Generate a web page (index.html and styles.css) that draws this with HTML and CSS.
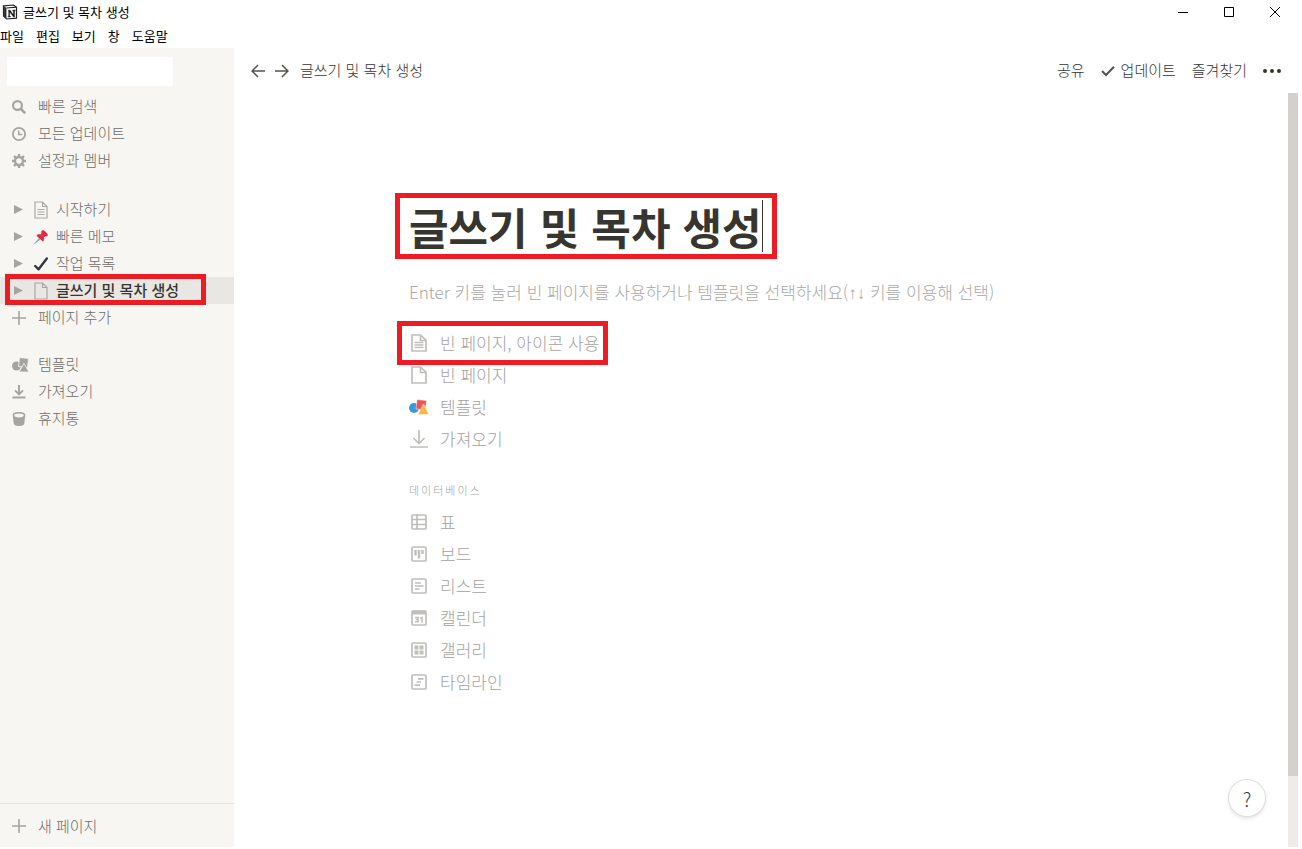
FILE: index.html
```html
<!DOCTYPE html>
<html lang="ko">
<head>
<meta charset="utf-8">
<title>글쓰기 및 목차 생성</title>
<link rel="stylesheet" href="styles.css">
</head>
<body>
<div class="app">
  <header class="titlebar">
    <svg class="logo" viewBox="0 0 16 16"><path d="M1.5 1.8 11.5 1l3 2.2v11L4.500 15 1.500 12z" fill="#fff" stroke="#222" stroke-width="1.200"/><path d="M1.500 1.800 4.500 4v11L1.500 12z" fill="#333"/><path d="M4.500 4l10-.8" stroke="#222" stroke-width="1.200"/><path d="M6 6.200h2.200l3.200 4.800V6.600l-.9-.2V6h2.900v.4l-.8.200V13h-1L7.600 7.800v4.600l1 .2v.4H5.900v-.4l.8-.2V6.800z" fill="#111" stroke="#111" stroke-width=".4"/></svg>
    <span class="titlebar-name">글쓰기 및 목차 생성</span>
    <div class="window-controls">
      <button type="button" aria-label="최소화"><svg viewBox="0 0 12 12"><path d="M1 6.500h10"/></svg></button>
      <button type="button" aria-label="최대화"><svg viewBox="0 0 12 12"><path d="M1.500 1.500h9v9h-9z"/></svg></button>
      <button type="button" aria-label="닫기"><svg viewBox="0 0 12 12"><path d="M1 1l10 10M11 1 1 11"/></svg></button>
    </div>
  </header>
  <nav class="menubar">
    <button type="button">파일</button><button type="button">편집</button><button type="button">보기</button><button type="button">창</button><button type="button">도움말</button>
  </nav>
  <div class="workspace">
    <aside class="sidebar">
      <div class="account"></div>
      <nav class="group">
        <a class="row" href="#"><svg class="icon" viewBox="0 0 14 14"><circle cx="5.500" cy="5.500" r="4.400" fill="none" stroke="currentColor" stroke-width="2.200"/><path d="M8.800 8.800 13.200 13.200" stroke="currentColor" stroke-width="2.600"/></svg><span class="label">빠른 검색</span></a>
        <a class="row" href="#"><svg class="icon" viewBox="0 0 14 14"><circle cx="7" cy="7" r="6.100" fill="none" stroke="currentColor" stroke-width="1.800"/><path d="M6.700 3.500v4h3.500" fill="none" stroke="currentColor" stroke-width="1.500"/></svg><span class="label">모든 업데이트</span></a>
        <a class="row" href="#"><svg class="icon" viewBox="0 0 14 14"><circle cx="7" cy="7" r="4" fill="none" stroke="currentColor" stroke-width="2.400"/><path d="M7 0v3M7 11v3M0 7h3M11 7h3M2 2l2.200 2.200M9.800 9.800 12 12M12 2 9.800 4.200M4.200 9.800 2 12" stroke="currentColor" stroke-width="2.400"/></svg><span class="label">설정과 멤버</span></a>
      </nav>
      <nav class="group pages">
        <a class="row" href="#"><svg class="arrow" viewBox="0 0 8 8"><path d="M0 0v8l8-4z"/></svg><svg class="page-icon" viewBox="0 0 14 18"><path d="M1 1h7.500L13 5.500V17H1zM8.500 1v4.500H13M3.500 8.500h7M3.500 11h7M3.500 13.500h7"/></svg><span class="label">시작하기</span></a>
        <a class="row" href="#"><svg class="arrow" viewBox="0 0 8 8"><path d="M0 0v8l8-4z"/></svg><svg class="emoji" viewBox="0 0 14 14"><path d="M5.500 8 .5 13.500l6-4.500z" fill="#8fa9b8" stroke="#8fa9b8"/><path d="M8 .8c1.500-1.200 6.200 3.200 5.300 4.800-.5.700-1.500.5-2.200.3L9.500 7.500c.5 1.500.2 2.800-.5 3.700L2.800 5.500c1-.9 2.200-1.200 3.700-.8l1.400-1.600C7.600 2.200 7.500 1.400 8 .8z" fill="#dd2e44" stroke="#dd2e44" stroke-width=".8"/><path d="M9 1.500l3.500 3.300M3.500 5.700l5 4.500" stroke="#b91f3b" stroke-width=".6"/></svg><span class="label">빠른 메모</span></a>
        <a class="row" href="#"><svg class="arrow" viewBox="0 0 8 8"><path d="M0 0v8l8-4z"/></svg><svg class="emoji" viewBox="0 0 14 14"><path d="M1.200 9 4.600 12.300 12.800 1.500" fill="none" stroke="#31373d" stroke-width="2.400" stroke-linecap="round" stroke-linejoin="round"/></svg><span class="label">작업 목록</span></a>
        <a class="row current" href="#" aria-current="page"><svg class="arrow" viewBox="0 0 8 8"><path d="M0 0v8l8-4z"/></svg><svg class="page-icon" viewBox="0 0 14 18"><path d="M1 1h7.500L13 5.500V17H1zM8.500 1v4.500H13"/></svg><span class="label">글쓰기 및 목차 생성</span><span class="mark mark-row"></span></a>
        <button class="row" type="button"><svg class="icon" viewBox="0 0 14 14"><path d="M7 0v14M0 7h14" stroke="currentColor" stroke-width="1.600"/></svg><span class="label">페이지 추가</span></button>
      </nav>
      <nav class="group tools">
        <a class="row" href="#"><svg class="icon shapes" viewBox="0 0 18 16"><circle cx="4.500" cy="9" r="4.500" fill="currentColor"/><path d="M7.500 .5l9 1-1 9-9-1z" fill="currentColor" stroke="#f7f6f3" stroke-width=".8"/><path d="M12 6.500 17 15H7z" fill="currentColor" stroke="#f7f6f3" stroke-width=".8"/></svg><span class="label">템플릿</span></a>
        <a class="row" href="#"><svg class="icon" viewBox="0 0 14 14"><path d="M7 0v9M3 5.300l4 4 4-4M.5 12.500h13" fill="none" stroke="currentColor" stroke-width="1.900"/></svg><span class="label">가져오기</span></a>
        <a class="row" href="#"><svg class="icon" viewBox="0 0 14 14"><path fill-rule="evenodd" d="M7 0c4 0 6.500 1.300 6.300 3l-1 8.500C12 13.200 10 14 7 14s-5-.8-5.300-2.500L.7 3C.5 1.300 3 0 7 0zm0 1.500c-2.700 0-4.800.8-4.800 1.800S3.800 5.500 7 5.500s4.800-1.200 4.800-2.200S9.700 1.500 7 1.500z" fill="currentColor"/></svg><span class="label">휴지통</span></a>
      </nav>
      <button class="new-page" type="button"><svg class="icon" viewBox="0 0 14 14"><path d="M7 0v14M0 7h14" stroke="currentColor" stroke-width="1.600"/></svg>새 페이지</button>
    </aside>
    <main class="main">
      <div class="topbar">
        <button type="button" aria-label="뒤로"><svg class="nav-arrow" viewBox="0 0 14 14"><path d="M14 7H1M7 1 1 7l6 6"/></svg></button>
        <button type="button" aria-label="앞으로"><svg class="nav-arrow" viewBox="0 0 14 14"><path d="M0 7h13M7 1l6 6-6 6"/></svg></button>
        <a class="crumb label" href="#">글쓰기 및 목차 생성</a>
        <div class="actions">
          <button type="button"><span class="label">공유</span></button>
          <button type="button"><svg class="check" viewBox="0 0 14 14"><path d="M1 7 5 11 13 2.700"/></svg><span class="label">업데이트</span></button>
          <button type="button"><span class="label">즐겨찾기</span></button>
          <button type="button" aria-label="더 보기"><svg class="dots" viewBox="0 0 18 4"><circle cx="2" cy="2" r="2"/><circle cx="9" cy="2" r="2"/><circle cx="16" cy="2" r="2"/></svg></button>
        </div>
      </div>
      <div class="scroller">
        <article class="page">
          <h1 class="title">글쓰기 및 목차 생성<span class="caret"></span><span class="mark mark-title"></span></h1>
          <p class="hint">Enter 키를 눌러 빈 페이지를 사용하거나 템플릿을 선택하세요(<span class="keys">↑↓</span> 키를 이용해 선택)</p>
          <div class="options">
            <button class="option" type="button"><svg class="doc" viewBox="0 0 16 18"><path d="M1 1h8.500L15 6.200V17H1zM9.500 1v5.500H15M3.500 8.500h9M3.500 11h9M3.500 13.500h9"/></svg><span class="label">빈 페이지, 아이콘 사용</span><span class="mark mark-option"></span></button>
            <button class="option" type="button"><svg class="doc" viewBox="0 0 16 18"><path d="M1 1h8.500L15 6.200V17H1zM9.500 1v5.500H15"/></svg><span class="label">빈 페이지</span></button>
            <button class="option" type="button"><svg class="color-shapes" viewBox="0 0 20 16"><circle cx="5" cy="9" r="5" fill="#3a9bdc"/><path d="M8 .5l9.500 1-1 9.500L7 10z" fill="#eb5757" stroke="#fff" stroke-width=".5"/><path d="M14.500 5 20 15.500H9z" fill="#f7b93e" stroke="#fff" stroke-width=".5"/></svg><span class="label">템플릿</span></button>
            <button class="option" type="button"><svg class="doc import" viewBox="0 0 18 18"><path d="M9 0v13M3.500 8 9 13.500 14.500 8M0 17h18"/></svg><span class="label">가져오기</span></button>
          </div>
          <h2 class="caption">데이터베이스</h2>
          <div class="options">
            <button class="option" type="button"><svg class="db" viewBox="0 0 16 16"><rect x="1" y="1" width="14" height="14" rx="1"/><path d="M1 5.500h14M1 10.500h14M6 1v14"/></svg><span class="label">표</span></button>
            <button class="option" type="button"><svg class="db" viewBox="0 0 16 16"><rect x="1" y="1" width="14" height="14" rx="1"/><path d="M4.500 4v5.500M8 4v8.500M11.500 4v4" stroke-width="2.400"/></svg><span class="label">보드</span></button>
            <button class="option" type="button"><svg class="db" viewBox="0 0 16 16"><rect x="1" y="1" width="14" height="14" rx="1"/><path d="M4 5h6M4 8h8.500M4 11h4.500"/></svg><span class="label">리스트</span></button>
            <button class="option" type="button"><svg class="db" viewBox="0 0 16 16"><rect x="1" y="1" width="14" height="14" rx="1"/><path d="M1 2.500h14" stroke-width="4"/><path d="M4 7.500h3v4.300H4M4.800 9.600H7M9.300 8.500l1.700-1v5" stroke-width="1.500"/></svg><span class="label">캘린더</span></button>
            <button class="option" type="button"><svg class="db" viewBox="0 0 16 16"><rect x="1" y="1" width="14" height="14" rx="1"/><path d="M3.500 3.500h4v4h-4zM8.500 3.500h4v4h-4zM3.500 8.500h4v4h-4zM8.500 8.500h4v4h-4z" fill="currentColor" stroke="none"/></svg><span class="label">갤러리</span></button>
            <button class="option" type="button"><svg class="db" viewBox="0 0 16 16"><rect x="1" y="1" width="14" height="14" rx="1"/><path d="M7 4.800h5.500M5.500 8H10M3.500 11.200H9"/></svg><span class="label">타임라인</span></button>
          </div>
        </article>
        <div class="scrollbar"><div class="thumb"></div></div>
        <button class="help" type="button" aria-label="도움말">?</button>
      </div>
    </main>
  </div>
</div>
</body>
</html>
```
FILE: styles.css
```css
* { box-sizing: border-box; }
body {
  margin: 0;
  background: #fff;
  color: #37352f;
  font-family: "Noto Sans CJK KR", sans-serif;
  font-size: 15px;
  font-weight: 300;
}
button {
  padding: 0;
  border: 0;
  background: none;
  color: inherit;
  font: inherit;
  text-align: left;
}
a { color: inherit; text-decoration: none; }
svg { display: block; flex: none; }

/* Optical centring of Hangul beside icons */
.label { padding-bottom: 2px; }

.app {
  display: flex;
  flex-direction: column;
  height: 100vh;
  padding: 0 4px 2px 0;
}
.titlebar {
  display: flex;
  align-items: center;
  gap: 5px;
  height: 24px;
  padding-left: 2px;
  color: #000;
  font-size: 13px;
  font-weight: 400;
  line-height: 24px;
}
.logo { width: 16px; height: 16px; }
.window-controls { display: flex; margin-left: auto; }
.window-controls button {
  display: flex;
  justify-content: center;
  width: 46px;
}
.window-controls svg {
  width: 12px;
  height: 12px;
  fill: none;
  stroke: #000;
}
.menubar {
  display: flex;
  gap: 12px;
  height: 24px;
  color: #000;
  font-size: 13px;
  font-weight: 400;
  line-height: 24px;
}
.workspace { display: flex; flex: 1; min-height: 0; }

.sidebar {
  display: flex;
  flex-direction: column;
  flex: none;
  width: 234px;
  background: #f7f6f3;
  color: #6f6d68;
}
.account {
  height: 29px;
  margin: 9px 61px 7px 7px;
  background: #fff;
}
.group { display: flex; flex-direction: column; }
.pages { margin-top: 22px; }
.tools { margin-top: 20px; }
.row {
  position: relative;
  display: flex;
  align-items: center;
  height: 27px;
  padding-left: 12px;
  line-height: 25px;
}
.icon {
  width: 14px;
  height: 14px;
  margin-right: 12px;
  color: #a5a4a0;
}
.shapes { width: 18px; height: 16px; margin-right: 8px; }
.arrow {
  width: 9px;
  height: 9px;
  margin: 0 11px 0 2px;
  fill: #a5a4a0;
}
.page-icon {
  width: 14px;
  height: 18px;
  margin-right: 8px;
  fill: none;
  stroke: #a9a8a4;
  stroke-width: 1.2;
}
.emoji { width: 14px; height: 14px; margin-right: 8px; }
.current {
  background: #e8e7e4;
  color: #37352f;
  font-weight: 500;
}
.new-page {
  display: flex;
  align-items: center;
  height: 44px;
  margin-top: auto;
  padding-left: 12px;
  border-top: 1px solid #e4e3df;
}

.main { display: flex; flex: 1; flex-direction: column; min-width: 0; }
.topbar {
  display: flex;
  align-items: center;
  gap: 10px;
  height: 45px;
  padding: 0 17px;
}
.nav-arrow {
  width: 14px;
  height: 14px;
  fill: none;
  stroke: #55534e;
  stroke-width: 1.5;
}
.crumb { padding-left: 1px; }
.actions { display: flex; align-items: center; gap: 16px; margin-left: auto; }
.actions button { display: flex; align-items: center; gap: 6px; }
.check { width: 14px; height: 14px; fill: none; stroke: #55534e; stroke-width: 2; }
.dots { width: 18px; height: 4px; fill: #37352f; }

.scroller { position: relative; display: flex; flex: 1; min-height: 0; }
.page {
  width: 100%;
  max-width: 708px;
  margin: 0 auto;
  padding: 104px 2px 0;
}
.title {
  position: relative;
  display: flex;
  align-items: center;
  width: max-content;
  height: 58px;
  margin: 0;
  font-size: 43px;
  font-weight: 700;
  line-height: 58px;
}
.caret { width: 1px; height: 52px; background: #37352f; }
.hint {
  margin: 23px 0 20px;
  color: #a9a8a5;
  font-size: 17px;
  line-height: 27px;
}
.keys { font-family: "Liberation Sans", sans-serif; }
.options { display: flex; flex-direction: column; align-items: flex-start; }
.option {
  position: relative;
  display: flex;
  align-items: center;
  height: 32px;
  color: #a3a29f;
  font-size: 17px;
}
.doc, .db { fill: none; stroke: #c0bfbc; stroke-width: 1.7; }
.doc { width: 16px; height: 18px; margin: 0 13px 0 2px; }
.import { width: 18px; margin: 0 12px 0 1px; }
.color-shapes { width: 20px; height: 16px; margin-right: 11px; }
.db { width: 16px; height: 16px; margin: 0 13px 0 2px; color: #c0bfbc; }
.caption {
  margin: 25px 0 6px;
  color: #a3a29f;
  font-size: 11px;
  font-weight: 300;
  letter-spacing: 2px;
  line-height: 20px;
}
.scrollbar { flex: none; width: 10px; background: #edece9; }
.thumb { height: 90.6%; background: #d3d1cb; }
.help {
  position: absolute;
  right: 33px;
  bottom: 31px;
  width: 36px;
  height: 36px;
  border-radius: 50%;
  background: #fff;
  box-shadow: 0 0 0 1px #dfdedc, 0 2px 4px #00000024;
  font-size: 19px;
  text-align: center;
}

/* Highlight frames drawn over the interface */
.mark { position: absolute; border: 5px solid #ed1c24; pointer-events: none; }
.mark-row { top: -3px; left: 5px; width: 201px; height: 31px; }
.mark-title { inset: -4px -14px -4px -14px; }
.mark-option { inset: -6px -9px -6px -12px; }
```
